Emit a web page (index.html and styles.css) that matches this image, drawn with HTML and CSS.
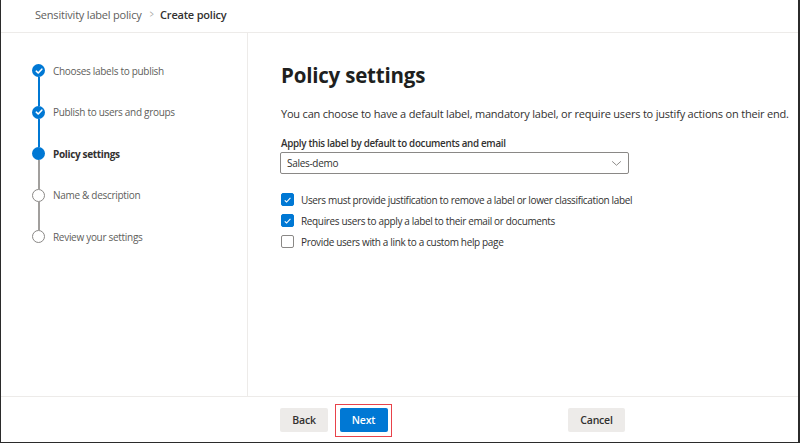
FILE: index.html
```html
<!DOCTYPE html>
<html>
<head>
<meta charset="utf-8">
<link rel="stylesheet" href="styles.css">
</head>
<body>
<div class="frame">
  <header class="header">
    <span class="crumb">Sensitivity label policy</span>
    <span class="sep">&gt;</span>
    <span class="crumb-current">Create policy</span>
  </header>
  <div class="main">
    <nav class="steps">
      <div class="step done">
        <span class="dot"><svg viewBox="0 0 12 12" width="12" height="12"><path d="M3.3 6.2 L5.2 8 L8.8 4.2" fill="none" stroke="#fff" stroke-width="1.6" stroke-linecap="round" stroke-linejoin="round"/></svg></span>
        <span class="label">Chooses labels to publish</span>
      </div>
      <div class="line blue"></div>
      <div class="step done">
        <span class="dot"><svg viewBox="0 0 12 12" width="12" height="12"><path d="M3.3 6.2 L5.2 8 L8.8 4.2" fill="none" stroke="#fff" stroke-width="1.6" stroke-linecap="round" stroke-linejoin="round"/></svg></span>
        <span class="label">Publish to users and groups</span>
      </div>
      <div class="line blue"></div>
      <div class="step current">
        <span class="dot"></span>
        <span class="label">Policy settings</span>
      </div>
      <div class="line"></div>
      <div class="step todo">
        <span class="dot"></span>
        <span class="label">Name &amp; description</span>
      </div>
      <div class="line"></div>
      <div class="step todo">
        <span class="dot"></span>
        <span class="label">Review your settings</span>
      </div>
    </nav>
    <section class="content">
      <h1 class="title">Policy settings</h1>
      <p class="desc">You can choose to have a default label, mandatory label, or require users to justify actions on their end.</p>
      <div class="field-label">Apply this label by default to documents and email</div>
      <div class="select">
        <span>Sales-demo</span>
        <svg class="chev" viewBox="0 0 12 8" width="11" height="7"><path d="M1 1.5 L6 6 L11 1.5" fill="none" stroke="#8a8886" stroke-width="1.1"/></svg>
      </div>
      <div class="checks">
        <label class="check"><span class="box on"><svg viewBox="0 0 12 12" width="12" height="12"><path d="M3 6.3 L5 8.2 L9.2 3.8" fill="none" stroke="#fff" stroke-width="1.2"/></svg></span>Users must provide justification to remove a label or lower classification label</label>
        <label class="check"><span class="box on"><svg viewBox="0 0 12 12" width="12" height="12"><path d="M3 6.3 L5 8.2 L9.2 3.8" fill="none" stroke="#fff" stroke-width="1.2"/></svg></span>Requires users to apply a label to their email or documents</label>
        <label class="check"><span class="box"></span>Provide users with a link to a custom help page</label>
      </div>
    </section>
  </div>
  <footer class="footer">
    <button class="btn">Back</button>
    <span class="highlight"><button class="btn primary">Next</button></span>
    <button class="btn cancel">Cancel</button>
  </footer>
</div>
</body>
</html>
```
FILE: styles.css
```css
* { box-sizing: border-box; }
html, body { margin: 0; padding: 0; background: #fff; }
body { font-family: "Open Sans", "Noto Sans", sans-serif; color: #323130; }
.frame {
  width: 800px; height: 443px;
  border-left: 1px solid #2b2b2b;
  border-right: 2px solid #2b2b2b;
  border-bottom: 1px solid #2b2b2b;
  display: flex; flex-direction: column;
}
.header {
  height: 33px; border-bottom: 1px solid #edebe9; flex: none;
  display: flex; align-items: center; padding-left: 34px; padding-bottom: 4px;
  font-size: 11px; letter-spacing: -0.2px;
}
.crumb { color: #605e5c; }
.sep { color: #a19f9d; margin: 0 6px 0 7px; font-size: 10px; transform: scaleX(0.7); }
.crumb-current { font-weight: 600; color: #323130; }
.main { flex: 1; display: flex; min-height: 0; }
.steps {
  flex: none; width: 247px; border-right: 1px solid #edebe9;
  padding: 31px 0 0 31px;
}
.step { display: flex; align-items: center; height: 13px; }
.dot {
  width: 13px; height: 13px; border-radius: 50%;
  display: flex; align-items: center; justify-content: center; flex: none;
}
.done .dot, .current .dot { background: #0078d4; }
.todo .dot { border: 1.5px solid #8a8886; background: #fff; }
.label { margin-left: 8px; font-size: 10px; letter-spacing: -0.3px; color: #605e5c; white-space: nowrap; }
.current .label { font-weight: 700; color: #323130; letter-spacing: -0.35px; }
.line { width: 2px; height: 28.6px; margin-left: 5.5px; background: #a19f9d; }
.line.blue { background: #0078d4; }
.content { flex: 1; padding: 25px 0 0 33px; min-width: 0; }
.title { margin: 0; font-size: 20.5px; font-weight: 700; letter-spacing: -0.2px; line-height: 34px; color: #201f1e; }
.desc { margin: 14px 0 0; font-size: 11px; letter-spacing: -0.2px; color: #323130; white-space: nowrap; }
.field-label { margin-top: 16px; font-size: 9.8px; letter-spacing: -0.3px; font-weight: 600; color: #323130; }
.select {
  margin-top: 2px; width: 349px; height: 22px; margin-left: -1px;
  border: 1px solid #8a8886; border-radius: 2px;
  display: flex; align-items: center; justify-content: space-between;
  padding: 0 6px 0 6px; font-size: 10px; letter-spacing: -0.3px;
}
.checks { margin-top: 19px; display: flex; flex-direction: column; gap: 8px; }
.check { display: flex; align-items: center; font-size: 10px; letter-spacing: -0.35px; height: 13px; }
.box {
  width: 13px; height: 13px; border: 1px solid #8a8886; border-radius: 2px;
  margin-right: 7px; display: flex; align-items: center; justify-content: center; flex: none;
}
.box.on { background: #0078d4; border-color: #0078d4; }
.footer {
  height: 46px; border-top: 1px solid #edebe9; flex: none;
  display: flex; align-items: center; padding-left: 279px; padding-top: 1px;
}
.btn {
  font-family: inherit; font-size: 10.5px; font-weight: 600; letter-spacing: -0.2px;
  height: 24px; border: none; border-radius: 2px;
  background: #edebe9; color: #323130; padding: 0; width: 48px;
}
.highlight {
  margin-left: 7px; border: 1.5px solid #e8424a; padding: 3.5px;
  display: flex;
}
.btn.primary { background: #0078d4; color: #fff; width: 48px; }
.btn.cancel { margin-left: 176px; width: 57px; }
```
